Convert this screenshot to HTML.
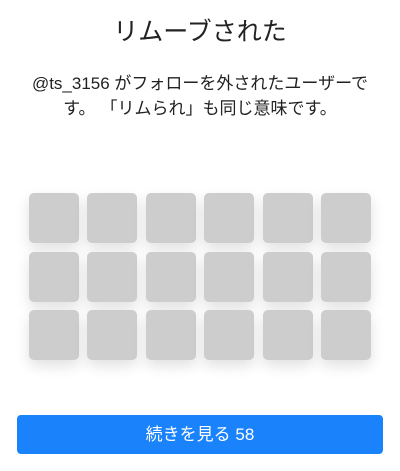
<!DOCTYPE html>
<html><head><meta charset="utf-8"><style>
body{margin:0;width:400px;height:471px;background:#fff;font-family:"Liberation Sans","Noto Sans CJK JP",sans-serif;color:#222;position:relative;overflow:hidden}
h1{position:absolute;top:14px;left:0;width:400px;margin:0;text-align:center;font-weight:400;font-size:25px;line-height:36px}
p{position:absolute;top:71px;left:0;width:400px;margin:0;text-align:center;font-size:17px;line-height:25px;color:#222}
.s{position:absolute;width:50px;height:50px;border-radius:5px;background:#cdcdcd;box-shadow:0 6px 14px rgba(0,0,0,0.12)}
.b{position:absolute;left:17px;top:415px;width:366px;height:39px;border-radius:4px;background:#1a82fb;color:#fff;font-size:17px;line-height:39px;text-align:center}
</style></head><body>
<h1>リムーブされた</h1>
<p>@ts_3156 がフォローを外されたユーザーで<br>す。<span style="display:inline-block;width:5px"></span>「リムられ」も同じ意味です。</p>
<div class="s" style="left:29px;top:193px"></div><div class="s" style="left:87px;top:193px"></div><div class="s" style="left:146px;top:193px"></div><div class="s" style="left:204px;top:193px"></div><div class="s" style="left:263px;top:193px"></div><div class="s" style="left:321px;top:193px"></div>
<div class="s" style="left:29px;top:252px"></div><div class="s" style="left:87px;top:252px"></div><div class="s" style="left:146px;top:252px"></div><div class="s" style="left:204px;top:252px"></div><div class="s" style="left:263px;top:252px"></div><div class="s" style="left:321px;top:252px"></div>
<div class="s" style="left:29px;top:310px"></div><div class="s" style="left:87px;top:310px"></div><div class="s" style="left:146px;top:310px"></div><div class="s" style="left:204px;top:310px"></div><div class="s" style="left:263px;top:310px"></div><div class="s" style="left:321px;top:310px"></div>
<div class="b">続きを見る 58</div>
</body></html>
